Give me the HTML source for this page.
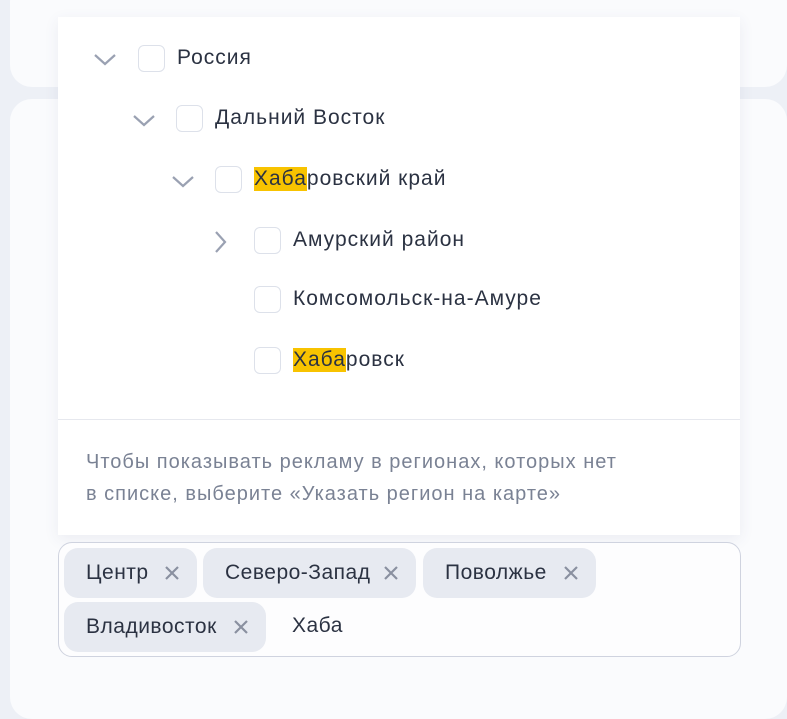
<!DOCTYPE html>
<html><head><meta charset="utf-8"><style>
*{box-sizing:border-box;margin:0;padding:0}
body{width:787px;height:705px;overflow:hidden;background:#edf0f6;font-family:"Liberation Sans","Noto Sans CJK SC",sans-serif;position:relative;color:#2b3242}
.card{position:absolute;background:#fafbfd;border-radius:22px}
.panel{position:absolute;left:58px;top:17px;width:682px;height:518px;background:#fff;box-shadow:0 4px 14px rgba(60,70,110,.08)}
.row{position:absolute;height:26px;display:flex;align-items:center;font-size:21px;letter-spacing:1px}
.cb{width:27px;height:27px;border:1px solid #dde1ea;border-radius:6px;margin-right:12px;flex:none;background:#fff}
.hl{background:#f8c300}
.chev{position:absolute;width:24px;height:14px}
.sep{position:absolute;left:58px;top:419px;width:682px;height:1px;background:#e6e8ee}
.note{position:absolute;left:86px;top:446px;font-size:20px;letter-spacing:1px;line-height:32px;color:#7a8294}
.tags{position:absolute;left:58px;top:542px;width:683px;height:115px;border:1px solid #cfd3df;border-radius:14px;background:#fdfdfe}
.tag{position:absolute;height:50px;background:#e7eaf1;border-radius:14px;font-size:21px;letter-spacing:.5px;display:flex;align-items:center;padding-left:22px;color:#2b3242}
.x{position:absolute;right:16px;top:16px;width:18px;height:18px}
</style></head><body>
<div class="card" style="left:10px;top:-20px;width:777px;height:107px"></div>
<div class="card" style="left:10px;top:99px;width:777px;height:620px"></div>
<div class="panel"></div>
<svg class="chev" style="left:93px;top:52px" viewBox="0 0 24 14"><path d="M2 3l10 9 10-9" fill="none" stroke="#9aa1b2" stroke-width="2.2"/></svg>
<svg class="chev" style="left:132px;top:113px" viewBox="0 0 24 14"><path d="M2 3l10 9 10-9" fill="none" stroke="#9aa1b2" stroke-width="2.2"/></svg>
<svg class="chev" style="left:171px;top:174px" viewBox="0 0 24 14"><path d="M2 3l10 9 10-9" fill="none" stroke="#9aa1b2" stroke-width="2.2"/></svg>
<svg style="position:absolute;left:213px;top:230px;width:14px;height:24px" viewBox="0 0 14 24"><path d="M3 2l9 10-9 10" fill="none" stroke="#9aa1b2" stroke-width="2.2"/></svg>
<div class="row" style="left:138px;top:45px"><div class="cb"></div>Россия</div>
<div class="row" style="left:176px;top:105px"><div class="cb"></div>Дальний Восток</div>
<div class="row" style="left:215px;top:166px"><div class="cb"></div><span class="hl">Хаба</span>ровский край</div>
<div class="row" style="left:254px;top:227px"><div class="cb"></div>Амурский район</div>
<div class="row" style="left:254px;top:286px"><div class="cb"></div>Комсомольск-на-Амуре</div>
<div class="row" style="left:254px;top:347px"><div class="cb"></div><span class="hl">Хаба</span>ровск</div>
<div class="sep"></div>
<div class="note">Чтобы показывать рекламу в регионах, которых нет<br>в списке, выберите «Указать регион на карте»</div>
<div class="tags"></div>
<div class="tag" style="left:64px;top:548px;width:133px">Центр<svg class="x" viewBox="0 0 18 18"><path d="M3 3l12 12M15 3L3 15" stroke="#8a90a0" stroke-width="2.2"/></svg></div>
<div class="tag" style="left:203px;top:548px;width:213px">Северо-Запад<svg class="x" viewBox="0 0 18 18"><path d="M3 3l12 12M15 3L3 15" stroke="#8a90a0" stroke-width="2.2"/></svg></div>
<div class="tag" style="left:423px;top:548px;width:173px">Поволжье<svg class="x" viewBox="0 0 18 18"><path d="M3 3l12 12M15 3L3 15" stroke="#8a90a0" stroke-width="2.2"/></svg></div>
<div class="tag" style="left:64px;top:602px;width:202px">Владивосток<svg class="x" viewBox="0 0 18 18"><path d="M3 3l12 12M15 3L3 15" stroke="#8a90a0" stroke-width="2.2"/></svg></div>
<div style="position:absolute;left:292px;top:614px;font-size:21px;letter-spacing:.5px">Хаба</div>
</body></html>
